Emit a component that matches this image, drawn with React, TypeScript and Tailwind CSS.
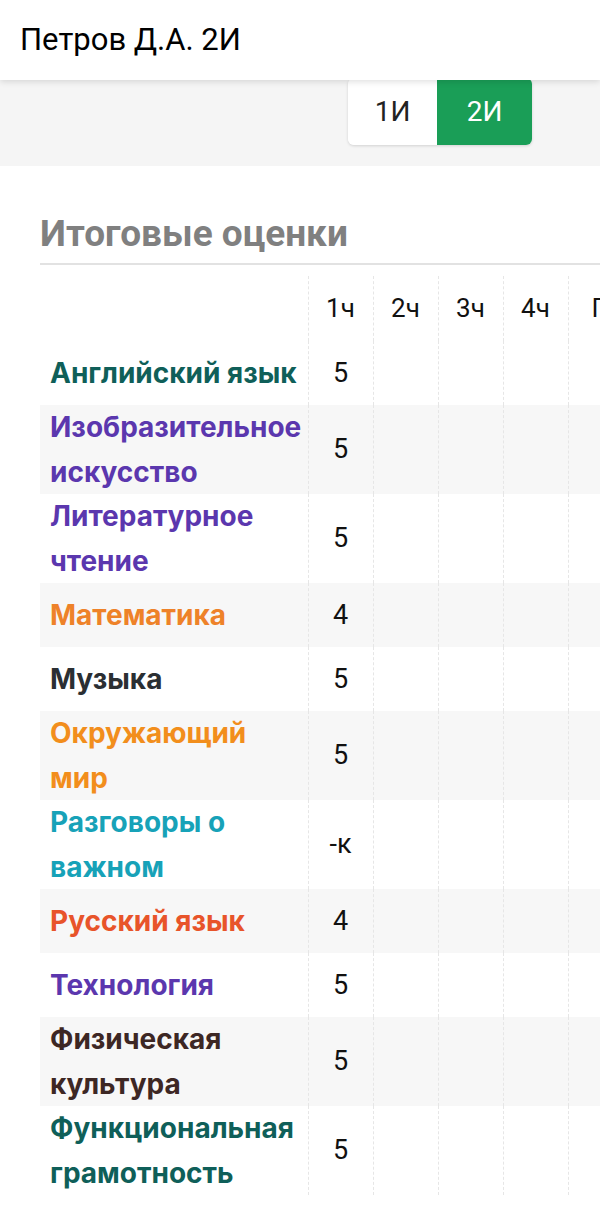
import React from "react";

type Row = { name: string[]; color: string; grade: string };

const rows: Row[] = [
  { name: ["Английский язык"], color: "text-[#0f5f59]", grade: "5" },
  { name: ["Изобразительное", "искусство"], color: "text-[#5b37ae]", grade: "5" },
  { name: ["Литературное", "чтение"], color: "text-[#5b37ae]", grade: "5" },
  { name: ["Математика"], color: "text-[#ee8229]", grade: "4" },
  { name: ["Музыка"], color: "text-[#2b2f33]", grade: "5" },
  { name: ["Окружающий", "мир"], color: "text-[#f28e1c]", grade: "5" },
  { name: ["Разговоры о", "важном"], color: "text-[#17a2b8]", grade: "-к" },
  { name: ["Русский язык"], color: "text-[#e8542a]", grade: "4" },
  { name: ["Технология"], color: "text-[#5b37ae]", grade: "5" },
  { name: ["Физическая", "культура"], color: "text-[#3d2724]", grade: "5" },
  { name: ["Функциональная", "грамотность"], color: "text-[#0f5f59]", grade: "5" },
];

const cols = ["1ч", "2ч", "3ч", "4ч", "П"];

export default function App() {
  return (
    <div className="w-[600px] h-[1215px] overflow-hidden bg-white font-['Roboto',sans-serif]">
      <header className="relative z-10 h-[80px] bg-white flex items-center px-[20px] shadow-[0_2px_6px_rgba(0,0,0,0.12)]">
        <span className="text-[31px] text-black">Петров Д.А. 2И</span>
      </header>
      <div className="h-[86px] bg-[#f5f5f5] flex justify-end pr-[68px]">
        <div className="flex h-[67px] -mt-[2px] rounded-[6px] overflow-hidden shadow-[0_1px_3px_rgba(0,0,0,0.15)]">
          <div className="w-[89px] bg-white flex items-center justify-center text-[28px] text-[#222]">1И</div>
          <div className="w-[95px] bg-[#1a9e57] flex items-center justify-center text-[28px] text-white">2И</div>
        </div>
      </div>
      <div className="pl-[40px]">
        <div className="pt-[47px] pb-[8px] border-b-2 border-[#e2e2e2]">
          <h2 className="text-[37px] leading-[42px] font-bold text-[#808080]">Итоговые оценки</h2>
        </div>
        <table className="mt-[11px] border-collapse table-fixed w-[593px]">
          <colgroup>
            <col className="w-[268px]" />
            {cols.map((c) => (
              <col key={c} className="w-[65px]" />
            ))}
          </colgroup>
          <thead>
            <tr className="h-[65px]">
              <th></th>
              {cols.map((c) => (
                <th
                  key={c}
                  className="border-l border-dashed border-[#e6e6e6] text-[26px] font-normal text-[#111] text-center align-middle"
                >
                  {c}
                </th>
              ))}
            </tr>
          </thead>
          <tbody>
            {rows.map((r, i) => (
              <tr key={i} className={i % 2 === 1 ? "bg-[#f7f7f7]" : "bg-white"}>
                <td className="h-[64px] pl-[10px] align-middle">
                  <div className={`font-['Inter',sans-serif] font-bold text-[28px] leading-[44.5px] ${r.color}`}>
                    {r.name.map((n, j) => (
                      <div key={j} className="whitespace-nowrap">{n}</div>
                    ))}
                  </div>
                </td>
                {cols.map((c, j) => (
                  <td
                    key={c}
                    className="border-l border-dashed border-[#e6e6e6] text-center align-middle text-[27px] text-[#111]"
                  >
                    {j === 0 ? r.grade : ""}
                  </td>
                ))}
              </tr>
            ))}
          </tbody>
        </table>
      </div>
    </div>
  );
}
